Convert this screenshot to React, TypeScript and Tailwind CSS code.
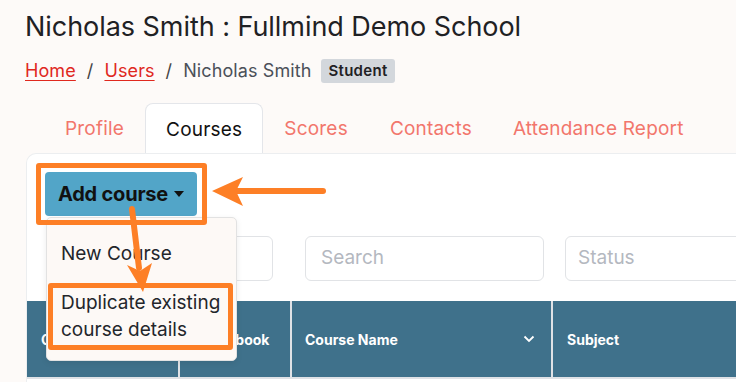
import React from "react";

export default function App() {
  const font = { fontFamily: "Inter, 'Noto Sans', sans-serif" };
  return (
    <div className="w-[736px] h-[382px] overflow-hidden bg-[#fdfaf8] relative text-[#1f2226]" style={font}>
      <div className="pl-[25px] pt-[11px]">
        <h1 className="text-[27px] leading-[32px] font-normal tracking-[-0.05px] text-[#1f2124]">
          Nicholas Smith : Fullmind Demo School
        </h1>
        <div className="mt-[15px] flex items-center h-[26px] text-[18px] leading-[26px] tracking-[0.1px]">
          <span className="text-[#e0281e] underline underline-offset-[3px]">Home</span>
          <span className="mx-[11px] text-[#444]">/</span>
          <span className="text-[#e0281e] underline underline-offset-[3px]">Users</span>
          <span className="mx-[11px] text-[#444]">/</span>
          <span className="text-[#4b5058]">Nicholas Smith</span>
          <span className="ml-[10px] rounded-[3px] bg-[#d3d7dc] px-[7px] text-[15px] leading-[24px] font-semibold tracking-[0.3px] text-[#1f2124]">
            Student
          </span>
        </div>
      </div>

      {/* tabs */}
      <div className="mt-[19px] ml-[44px] flex h-[50px] items-stretch text-[19px] tracking-[0.2px] text-[#f2766c]">
        <div className="flex items-center pt-[3px] px-[21px]">Profile</div>
        <div className="flex items-center pt-[3px] px-[20px] bg-white border border-b-0 border-[#e4e6ea] rounded-t-[8px] text-[#111]">
          Courses
        </div>
        <div className="flex items-center pt-[3px] px-[21px]">Scores</div>
        <div className="flex items-center pt-[3px] px-[21px]">Contacts</div>
        <div className="flex items-center pt-[3px] px-[20px]">Attendance Report</div>
      </div>

      {/* panel */}
      <div className="ml-[26px] bg-white border-t border-l border-[#eceef0] rounded-tl-[10px] h-[240px]">
        <div className="pt-[18px] pl-[18px]">
          <button className="h-[44px] w-[152px] rounded-[4px] bg-[#52a5c8] flex items-center justify-center gap-[6px] text-[20px] font-bold text-[#111] tracking-[-0.2px]">
            Add course
            <svg width="10" height="6" viewBox="0 0 10 6"><path d="M0 0h10L5 6z" fill="#111" /></svg>
          </button>
        </div>
        <div className="mt-[20px] flex h-[45px]">
          <div className="shrink-0 ml-[19px] w-[227px] rounded-[6px] border border-[#e1e3e6]" />
          <div className="shrink-0 ml-[32px] w-[239px] rounded-[6px] border border-[#e1e3e6] flex items-center px-[15px] text-[19px] text-[#b4b8bf]">
            Search
          </div>
          <div className="shrink-0 ml-[21px] w-[200px] rounded-[6px] border border-[#e1e3e6] flex items-center px-[12px] text-[19px] text-[#b4b8bf]">
            Status
          </div>
        </div>
        <div className="mt-[20px] flex h-[78px] bg-[#3f718b] text-white text-[14px] font-bold border-b-[2px] border-[#dfe2e6]">
          <div className="shrink-0 w-[153px] flex items-center px-[14px] border-r-[2px] border-[#dfe2e6]">Course</div>
          <div className="shrink-0 w-[112px] flex items-center px-[14px] border-r-[2px] border-[#dfe2e6]">Gradebook</div>
          <div className="shrink-0 w-[261px] flex items-center justify-between pl-[13px] pr-[16px] border-r-[2px] border-[#dfe2e6]">
            <span>Course Name</span>
            <svg width="12" height="8" viewBox="0 0 12 8"><path d="M1.5 1.5 6 6l4.5-4.5" stroke="white" strokeWidth="1.8" fill="none" /></svg>
          </div>
          <div className="flex-1 flex items-center px-[14px]">Subject</div>
        </div>
      </div>

      {/* dropdown menu */}
      <div className="absolute left-[46px] top-[217px] w-[191px] h-[144px] bg-[#fdf9f6] border border-[#e2e2e2] rounded-[5px] shadow-[0_2px_6px_rgba(0,0,0,0.08)] text-[19px] text-[#23262b]">
        <div className="absolute left-[14px] top-[23px] leading-[26px]">New Course</div>
        <div className="absolute left-[14px] top-[71px] leading-[27px]">
          Duplicate existing
          <br />
          course details
        </div>
      </div>

      {/* annotations */}
      <div className="absolute left-[36px] top-[163px] w-[171px] h-[62px] border-[5px] border-[#fd7f26] rounded-[3px]" />
      <div className="absolute left-[48px] top-[283px] w-[185px] h-[67px] border-[5px] border-[#fd7f26] rounded-[3px]" />
      <svg className="absolute left-0 top-0" width="736" height="382" viewBox="0 0 736 382">
        <line x1="323" y1="191" x2="232" y2="191" stroke="#fd7f26" strokeWidth="6" strokeLinecap="round" />
        <polygon points="212,191 243,177 236,191 243,206" fill="#fd7f26" />
        <line x1="132" y1="209" x2="139" y2="268" stroke="#fd7f26" strokeWidth="6" strokeLinecap="round" />
        <polygon points="143,292 127,265 140,271 152,263" fill="#fd7f26" />
      </svg>
    </div>
  );
}
